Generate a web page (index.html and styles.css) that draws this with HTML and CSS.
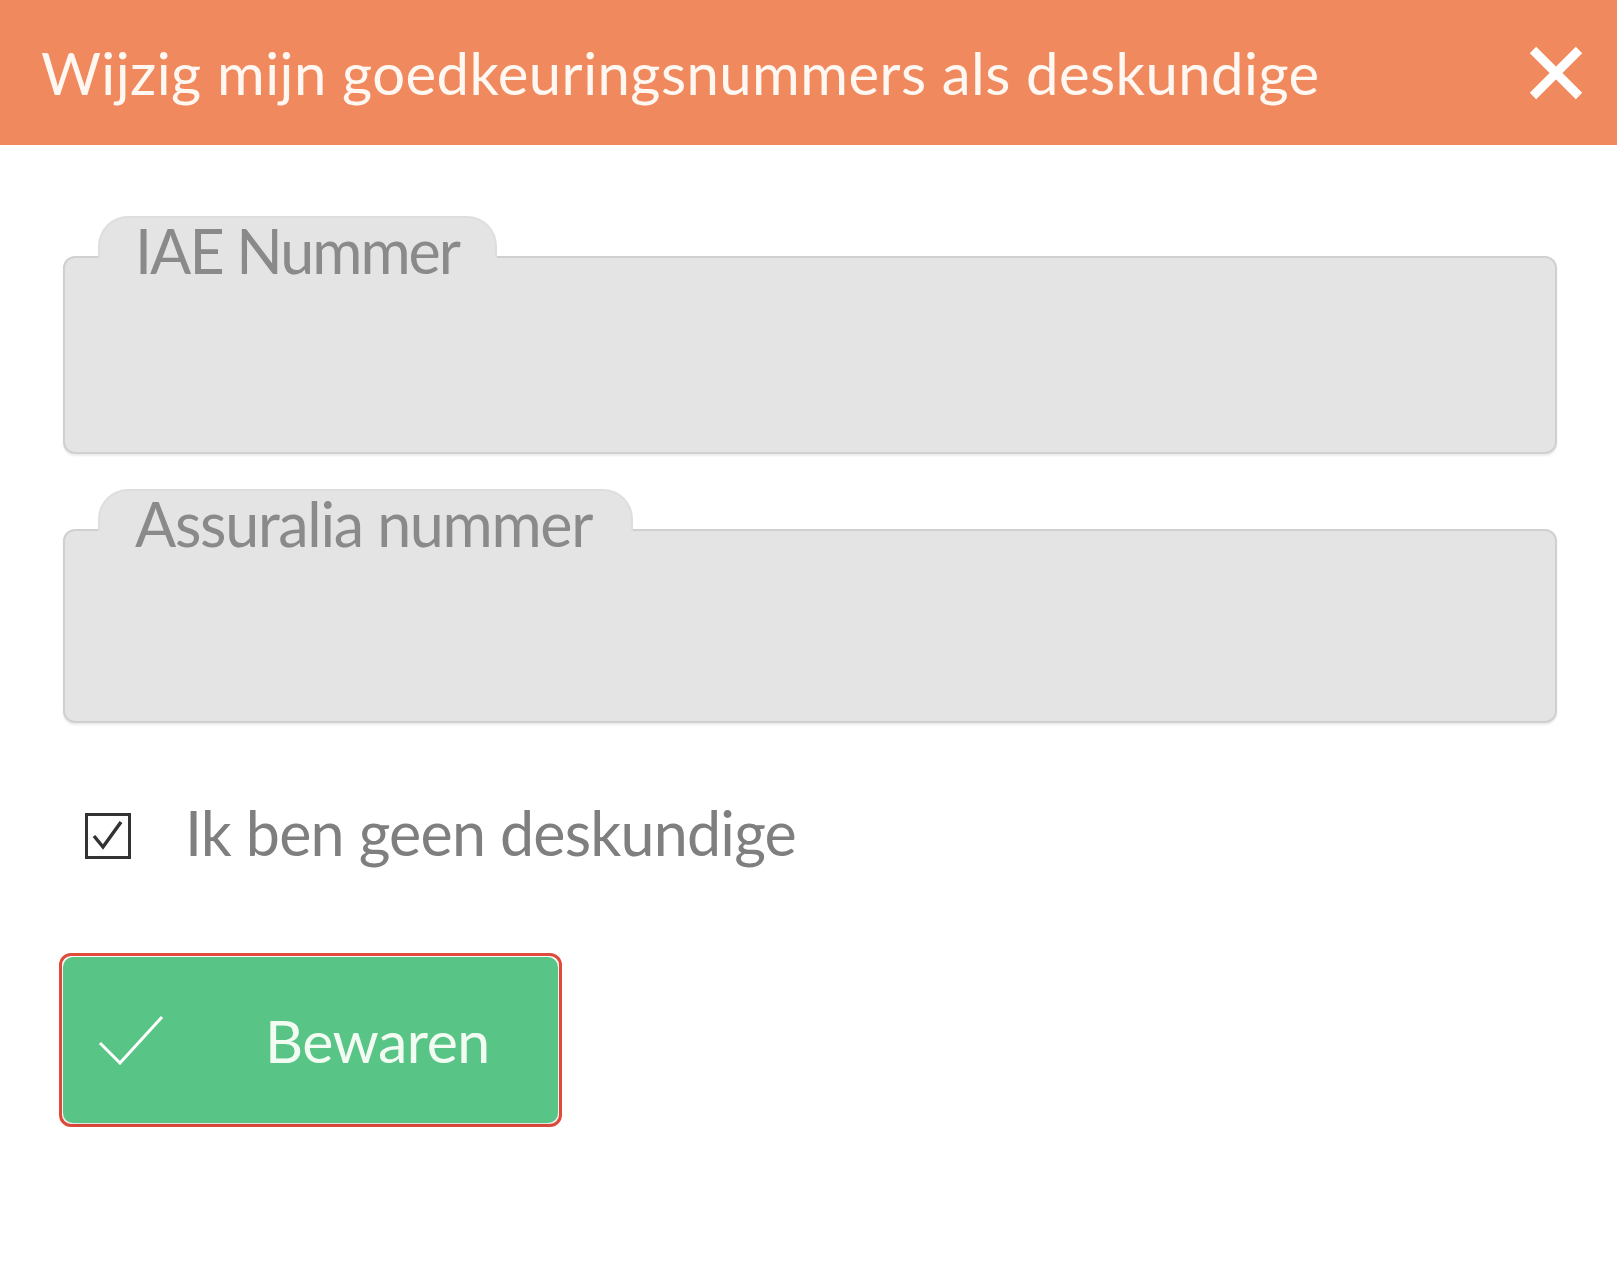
FILE: index.html
```html
<!DOCTYPE html>
<html lang="nl">
<head>
<meta charset="utf-8">
<title>Wijzig mijn goedkeuringsnummers als deskundige</title>
<link rel="stylesheet" href="styles.css">
</head>
<body>
<header class="header">
  <h1 class="title">Wijzig mijn goedkeuringsnummers als deskundige</h1>
  <button class="close" aria-label="Sluiten">
    <svg viewBox="0 0 58 56" width="58" height="56"><path d="M6 5 L52 51 M52 5 L6 51" stroke="#fff" stroke-width="9" stroke-linecap="butt" fill="none"/></svg>
  </button>
</header>
<main class="content">
  <div class="field">
    <div class="tab tab-iae"><span class="label label-iae">IAE Nummer</span></div>
    <div class="box"></div>
  </div>
  <div class="field field-2">
    <div class="tab tab-ass"><span class="label label-ass">Assuralia nummer</span></div>
    <div class="box box-2"></div>
  </div>
  <label class="check-row">
    <span class="checkbox">
      <svg viewBox="0 0 40 40" width="40" height="40"><path d="M6 20 L15 31 L33 6" stroke="#333" stroke-width="3.5" fill="none"/></svg>
    </span>
    <span class="check-text">Ik ben geen deskundige</span>
  </label>
  <div class="save-frame">
    <button class="save">
      <svg class="save-icon" viewBox="0 0 66 50" width="66" height="50"><path d="M2 28 L22 48 L64 2" stroke="#fff" stroke-width="3" fill="none"/></svg>
      <span class="save-text">Bewaren</span>
    </button>
  </div>
</main>
</body>
</html>
```
FILE: styles.css
```css
html, body {
  margin: 0;
  padding: 0;
  background: #fff;
  font-family: Lato, "Open Sans", sans-serif;
}

.header {
  height: 145px;
  background: #f08a5e;
  display: flex;
  align-items: center;
  justify-content: space-between;
  padding: 0 32px 0 41px;
  box-sizing: border-box;
}

.title {
  margin: 0;
  font-weight: 400;
  font-size: 58px;
  color: #fff8f2;
  letter-spacing: 0.45px;
  line-height: 1;
}

.close {
  background: none;
  border: 0;
  padding: 0;
  width: 58px;
  height: 56px;
  display: flex;
  cursor: pointer;
}

.content {
  padding: 71px 60px 0 63px;
}

.field {
  display: flex;
  flex-direction: column;
}

.field-2 {
  margin-top: 35px;
}

.tab {
  position: relative;
  z-index: 1;
  height: 40px;
  margin-left: 35px;
  margin-bottom: -2px;
  background: #e4e4e4;
  border: 2px solid #dedede;
  border-bottom: 0;
  border-radius: 30px 30px 0 0;
  box-sizing: content-box;
  padding-left: 35px;
}

.tab-iae { width: 360px; }
.tab-ass { width: 496px; }

.label {
  display: block;
  font-size: 61px;
  line-height: 73px;
  margin-top: -4px;
  color: #8a8a8a;
  white-space: nowrap;
}

.label-iae { letter-spacing: -2px; }
.label-ass { letter-spacing: -1.3px; }

.box {
  height: 194px;
  background: #e4e4e4;
  border: 2px solid #d0d0d0;
  border-radius: 12px;
  box-shadow: 0 2px 2px rgba(0, 0, 0, 0.08);
}

.box-2 {
  height: 190px;
}

.check-row {
  display: flex;
  align-items: center;
  margin: 82px 0 0 22px;
}

.checkbox {
  width: 46px;
  height: 46px;
  box-sizing: border-box;
  border: 3px solid #333;
  display: flex;
  align-items: center;
  justify-content: center;
}

.check-text {
  margin-left: 54px;
  font-size: 61px;
  color: #7f7f7f;
  line-height: 1;
  letter-spacing: -0.8px;
  position: relative;
  top: -3px;
}

.save-frame {
  margin-top: 87px;
  width: 495px;
  margin-left: -4px;
  padding: 1px;
  border: 3px solid #e04b3c;
  border-radius: 12px;
}

.save {
  width: 495px;
  height: 166px;
  background: #58c486;
  border: 0;
  border-radius: 10px;
  display: flex;
  align-items: center;
  padding: 0 0 0 35px;
  box-sizing: border-box;
  box-shadow: 0 2px 3px rgba(0, 0, 0, 0.12);
  font-family: Lato, "Open Sans", sans-serif;
}

.save-icon {
  flex: none;
}

.save-text {
  margin-left: 101px;
  font-size: 59px;
  color: #f3fcf3;
  line-height: 1;
  letter-spacing: -0.5px;
}
```
